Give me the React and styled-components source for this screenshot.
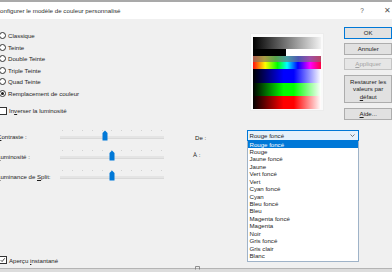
import styled, { createGlobalStyle } from 'styled-components';

const GlobalStyle = createGlobalStyle`
  html, body {
    margin: 0;
    padding: 0;
    background: #f0f0f0;
  }
  body {
    width: 392px;
    height: 272px;
    overflow: hidden;
    font-family: "Liberation Sans", Arial, sans-serif;
    font-size: 6.1px;
    color: #1e1e1e;
  }
`

const Dialog = styled.div`
    width: 400px;
    height: 272px;
    margin-left: -8px;
    display: flex;
    flex-direction: column;
    background: #f0f0f0;
`

const TopStrip = styled.div`
    height: 2px;
    background: #a9a9a9;
`

const TitleBar = styled.div`
    height: 17px;
    background: #fff;
    display: flex;
    align-items: center;
    padding-left: 3.6px;
`

const Title = styled.div`
    flex: 1;
    font-size: 6.2px;
    color: #303030;
`

const TitleButton = styled.span`
    width: ${p => p.$w}px;
    text-align: center;
    color: #555;
    font-size: ${p => p.$size}px;
`

const Body = styled.div`
    flex: 1;
    display: flex;
    flex-direction: column;
    padding: 0 0 3px 5px;
`

const TopSection = styled.div`
    display: flex;
    padding-top: 8px;
`

const Modes = styled.div`
    width: 253px;
    padding: 3px 0 0 2px;
    display: flex;
    flex-direction: column;
`

const OptionRow = styled.label`
    height: ${p => p.$h || 11.5}px;
    margin-top: ${p => p.$mt || 0}px;
    display: flex;
    align-items: center;
    gap: ${p => p.$gap || 2}px;
    white-space: nowrap;
`

const RadioCircle = styled.span`
    width: 7px;
    height: 7px;
    box-sizing: border-box;
    border: 1px solid #333;
    border-radius: 50%;
    background: #fff;
    display: flex;
    align-items: center;
    justify-content: center;

    &::after {
        content: '';
        width: 3px;
        height: 3px;
        border-radius: 50%;
        background: ${p => p.$on ? '#1a1a1a' : 'transparent'};
    }
`

const CheckBox = styled.span`
    width: 7.5px;
    height: 7.5px;
    box-sizing: border-box;
    border: 1px solid #333;
    background: #fff;
    display: flex;
    align-items: center;
    justify-content: center;
`

const PreviewFrame = styled.div`
    width: 75px;
    height: 78px;
    margin-top: 6px;
    box-sizing: border-box;
    padding: 3px 2px 1px 2px;
    background: #fafafa;
    border: 1px solid #ececec;
    display: flex;
    flex-direction: column;
`

const Band = styled.div`
    height: ${p => p.$h}px;
    background: ${p => p.$bg};
    width: ${p => p.$w || '100%'};
`

const Buttons = styled.div`
    width: 48px;
    margin-left: 20px;
    display: flex;
    flex-direction: column;
`

const DialogButton = styled.div`
    height: ${p => p.$h || 12}px;
    margin-top: ${p => p.$mt || 0}px;
    box-sizing: border-box;
    border: 1px solid ${p => p.$default ? '#0078d7' : p.$disabled ? '#c4c4c4' : '#adadad'};
    background: ${p => p.$disabled ? '#e6e6e6' : '#e1e1e1'};
    color: ${p => p.$disabled ? '#a3a3a3' : '#1e1e1e'};
    display: flex;
    align-items: center;
    justify-content: center;
    text-align: center;
    line-height: 7.5px;
`

const Lower = styled.div`
    display: flex;
    margin-top: 6.5px;
`

const SliderCol = styled.div`
    width: 167px;
    display: flex;
    flex-direction: column;
`

const SliderRow = styled.div`
    height: 20px;
    display: flex;
    align-items: center;
`

const SliderLabel = styled.span`
    width: 63px;
    white-space: nowrap;
`

const Track = styled.div`
    flex: 1;
    height: 100%;
    position: relative;

    &::before {
        content: '';
        position: absolute;
        left: 0;
        right: 0;
        top: 9px;
        height: 2px;
        background: #e4e4e4;
        border-bottom: 1px solid #d9d9d9;
    }
`

const Ticks = styled.div`
    position: absolute;
    left: 2px;
    right: 2px;
    top: 3.5px;
    height: 1px;
    display: flex;
    justify-content: space-between;

    span {
        width: 1px;
        height: 1px;
        background: #d2d2d2;
    }
`

const Thumb = styled.svg`
    position: absolute;
    top: 3px;
    width: 6px;
    height: 11px;
    margin-left: -3px;
`

const LabelCol = styled.div`
    width: 54px;
    padding: 2px 0 0 29px;
    display: flex;
    flex-direction: column;
`

const SideLabel = styled.div`
    height: 17px;
    display: flex;
    align-items: center;
    padding-left: ${p => p.$pl || 0}px;
`

const ComboCol = styled.div`
    width: 112px;
    padding-top: 3px;
    position: relative;
`

const Combo = styled.div`
    height: 11px;
    box-sizing: border-box;
    border: 1px solid #0078d7;
    background: #e5f1fb;
    display: flex;
    align-items: center;
    justify-content: space-between;
    padding: 0 3px 0 1.5px;
`

const DropList = styled.ul`
    position: absolute;
    top: 14px;
    left: 0;
    width: 112px;
    box-sizing: border-box;
    margin: 0;
    padding: 0 0 1px 0;
    list-style: none;
    background: #fff;
    border: 1px solid #9fb3c8;
    border-top: none;
`

const DropItem = styled.li`
    height: 7.45px;
    line-height: 7.45px;
    padding-left: 1.5px;
    background: ${p => p.$selected ? '#0078d7' : 'transparent'};
    color: ${p => p.$selected ? '#fff' : '#1e1e1e'};
`

const Footer = styled.div`
    margin-top: auto;
    padding-left: 2px;
`

const BottomBar = styled.div`
    height: 4px;
    background: #dcdcdc;
    border-top: 1px solid #b4b4b4;
    box-sizing: border-box;
    display: flex;
    padding-left: 203px;
`

const Grip = styled.svg`
    width: 5px;
    height: 4px;
    margin-top: -3px;
`

const modes = ['Classique', 'Teinte', 'Double Teinte', 'Triple Teinte', 'Quad Teinte', 'Remplacement de couleur'];

const colors = ['Rouge foncé', 'Rouge', 'Jaune foncé', 'Jaune', 'Vert foncé', 'Vert', 'Cyan foncé', 'Cyan',
    'Bleu foncé', 'Bleu', 'Magenta foncé', 'Magenta', 'Noir', 'Gris foncé', 'Gris clair', 'Blanc'];

const sliders = [
    { key: 'C', rest: 'ontraste :', value: 0.43 },
    { key: 'L', rest: 'uminosité :', value: 0.5 },
    { key: 'L', rest: 'uminance de ', tail: 'S', after: 'plit:', value: 0.5 },
];

const Check = () => (
    <svg width="6" height="6" viewBox="0 0 6 6">
        <path d="M0.8 3.2 L2.3 4.7 L5.2 1.1" fill="none" stroke="#222" strokeWidth="0.9" />
    </svg>
)

const App = () => {
  return (
    <>
      <GlobalStyle />
      <Dialog>
        <TopStrip />
        <TitleBar>
            <Title>Configurer le modèle de couleur personnalisé</Title>
            <TitleButton $w={40} $size={6.5}>?</TitleButton>
            <TitleButton $w={10} $size={8}>✕</TitleButton>
        </TitleBar>
        <Body>
            <TopSection>
                <Modes>
                    {modes.map((m, i) => (
                        <OptionRow key={m}>
                            <RadioCircle $on={i === modes.length - 1} />
                            {m}
                        </OptionRow>
                    ))}
                    <OptionRow $mt={6} $gap={2.5}>
                        <CheckBox />
                        <span>In<u>v</u>erser la luminosité</span>
                    </OptionRow>
                </Modes>
                <PreviewFrame>
                    <Band $h={12} $bg="linear-gradient(to right, #000, #f2f2f2)" />
                    <Band $h={8} $bg="linear-gradient(to right, #000 49%, #fff 49%)" />
                    <Band $h={6} $w="99%" $bg="linear-gradient(to right, #a8584c, #a89c44, #58a44c, #4c9ca4, #4c58b0, #9c50a8, #b84464)" />
                    <Band $h={7} $w="99%" $bg="linear-gradient(to right, #ff1010, #ffff00 18%, #00ff00 36%, #00ffff 50%, #0000ff 66%, #ff00ff 84%, #ff0040)" />
                    <Band $h={14} $bg="linear-gradient(to right, #000, #0000ff 45%, #0000ff 60%, #fff)" />
                    <Band $h={14} $bg="linear-gradient(to right, #000, #00ff00 45%, #00ff00 60%, #fff)" />
                    <Band $h={13} $bg="linear-gradient(to right, #000, #ff0000 45%, #ff0000 60%, #fff)" />
                </PreviewFrame>
                <Buttons>
                    <DialogButton $default><span>OK</span></DialogButton>
                    <DialogButton $mt={4}><span>Annuler</span></DialogButton>
                    <DialogButton $mt={3} $disabled><span><u>A</u>ppliquer</span></DialogButton>
                    <DialogButton $mt={5} $h={28}>
                        <span>Restaurer les<br />valeurs par<br /><u>d</u>éfaut</span>
                    </DialogButton>
                    <DialogButton $mt={5}><span><u>A</u>ide...</span></DialogButton>
                </Buttons>
            </TopSection>
            <Lower>
                <SliderCol>
                    {sliders.map((s, i) => (
                        <SliderRow key={i}>
                            <SliderLabel>
                                <u>{s.key}</u>{s.rest}{s.tail && <u>{s.tail}</u>}{s.after}
                            </SliderLabel>
                            <Track>
                                <Ticks>
                                    {Array.from({ length: 11 }).map((_, j) => <span key={j} />)}
                                </Ticks>
                                <Thumb viewBox="0 0 6 11" style={{ left: `${s.value * 100}%` }}>
                                    <path d="M0.5 3 L3 0.5 L5.5 3 V10.5 H0.5 Z" fill="#0078d7" />
                                </Thumb>
                            </Track>
                        </SliderRow>
                    ))}
                </SliderCol>
                <LabelCol>
                    <SideLabel $pl={2}>De :</SideLabel>
                    <SideLabel>À :</SideLabel>
                </LabelCol>
                <ComboCol>
                    <Combo>
                        <span>Rouge foncé</span>
                        <svg width="5" height="3" viewBox="0 0 5 3">
                            <path d="M0.5 0.5 L2.5 2.5 L4.5 0.5" fill="none" stroke="#444" strokeWidth="0.7" />
                        </svg>
                    </Combo>
                    <DropList>
                        {colors.map((c, i) => (
                            <DropItem key={c} $selected={i === 0}>{c}</DropItem>
                        ))}
                    </DropList>
                </ComboCol>
            </Lower>
            <Footer>
                <OptionRow $h={10} $gap={2.5}>
                    <CheckBox><Check /></CheckBox>
                    <span>Aperçu <u>i</u>nstantané</span>
                </OptionRow>
            </Footer>
        </Body>
        <BottomBar>
            <Grip viewBox="0 0 5 4">
                <path d="M0.5 3.5 V0.5 H4.5 V3.5" fill="none" stroke="#777" strokeWidth="0.8" />
            </Grip>
        </BottomBar>
      </Dialog>
    </>
  )
}

export default App;
